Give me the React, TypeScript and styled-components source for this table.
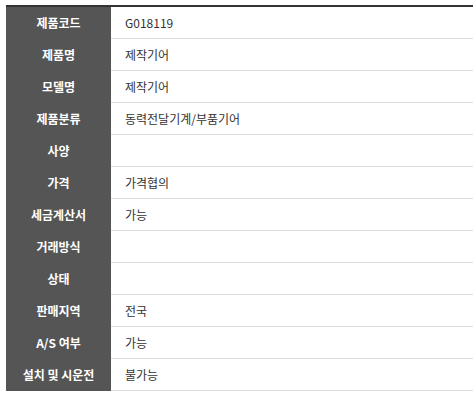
import React from "react";
import styled, { createGlobalStyle } from "styled-components";

const Global = createGlobalStyle`
  html, body { margin: 0; padding: 0; background: #fff; }
  body { font-family: "Noto Sans CJK KR", "Noto Sans", sans-serif; }
`;

const Wrap = styled.div`
  padding: 5px 0 0 6px;
`;

const Table = styled.table`
  width: 467px;
  border-collapse: collapse;
  border-top: 2px solid #333;
  table-layout: fixed;
`;

const Label = styled.th`
  width: 105px;
  height: 31px;
  padding: 0;
  background: #555;
  color: #fff;
  font-size: 12px;
  font-weight: 700;
  text-align: center;
  border-bottom: 1px solid #555;
`;

const Value = styled.td`
  height: 31px;
  padding: 0 0 0 14px;
  color: #333;
  font-size: 12px;
  border-bottom: 1px solid #ddd;
`;

const rows: [string, string][] = [
  ["제품코드", "G018119"],
  ["제품명", "제작기어"],
  ["모델명", "제작기어"],
  ["제품분류", "동력전달기계/부품기어"],
  ["사양", ""],
  ["가격", "가격협의"],
  ["세금계산서", "가능"],
  ["거래방식", ""],
  ["상태", ""],
  ["판매지역", "전국"],
  ["A/S 여부", "가능"],
  ["설치 및 시운전", "불가능"],
];

export default function App() {
  return (
    <Wrap>
      <Global />
      <Table>
        <tbody>
          {rows.map(([k, v]) => (
            <tr key={k}>
              <Label>{k}</Label>
              <Value>{v}</Value>
            </tr>
          ))}
        </tbody>
      </Table>
    </Wrap>
  );
}
